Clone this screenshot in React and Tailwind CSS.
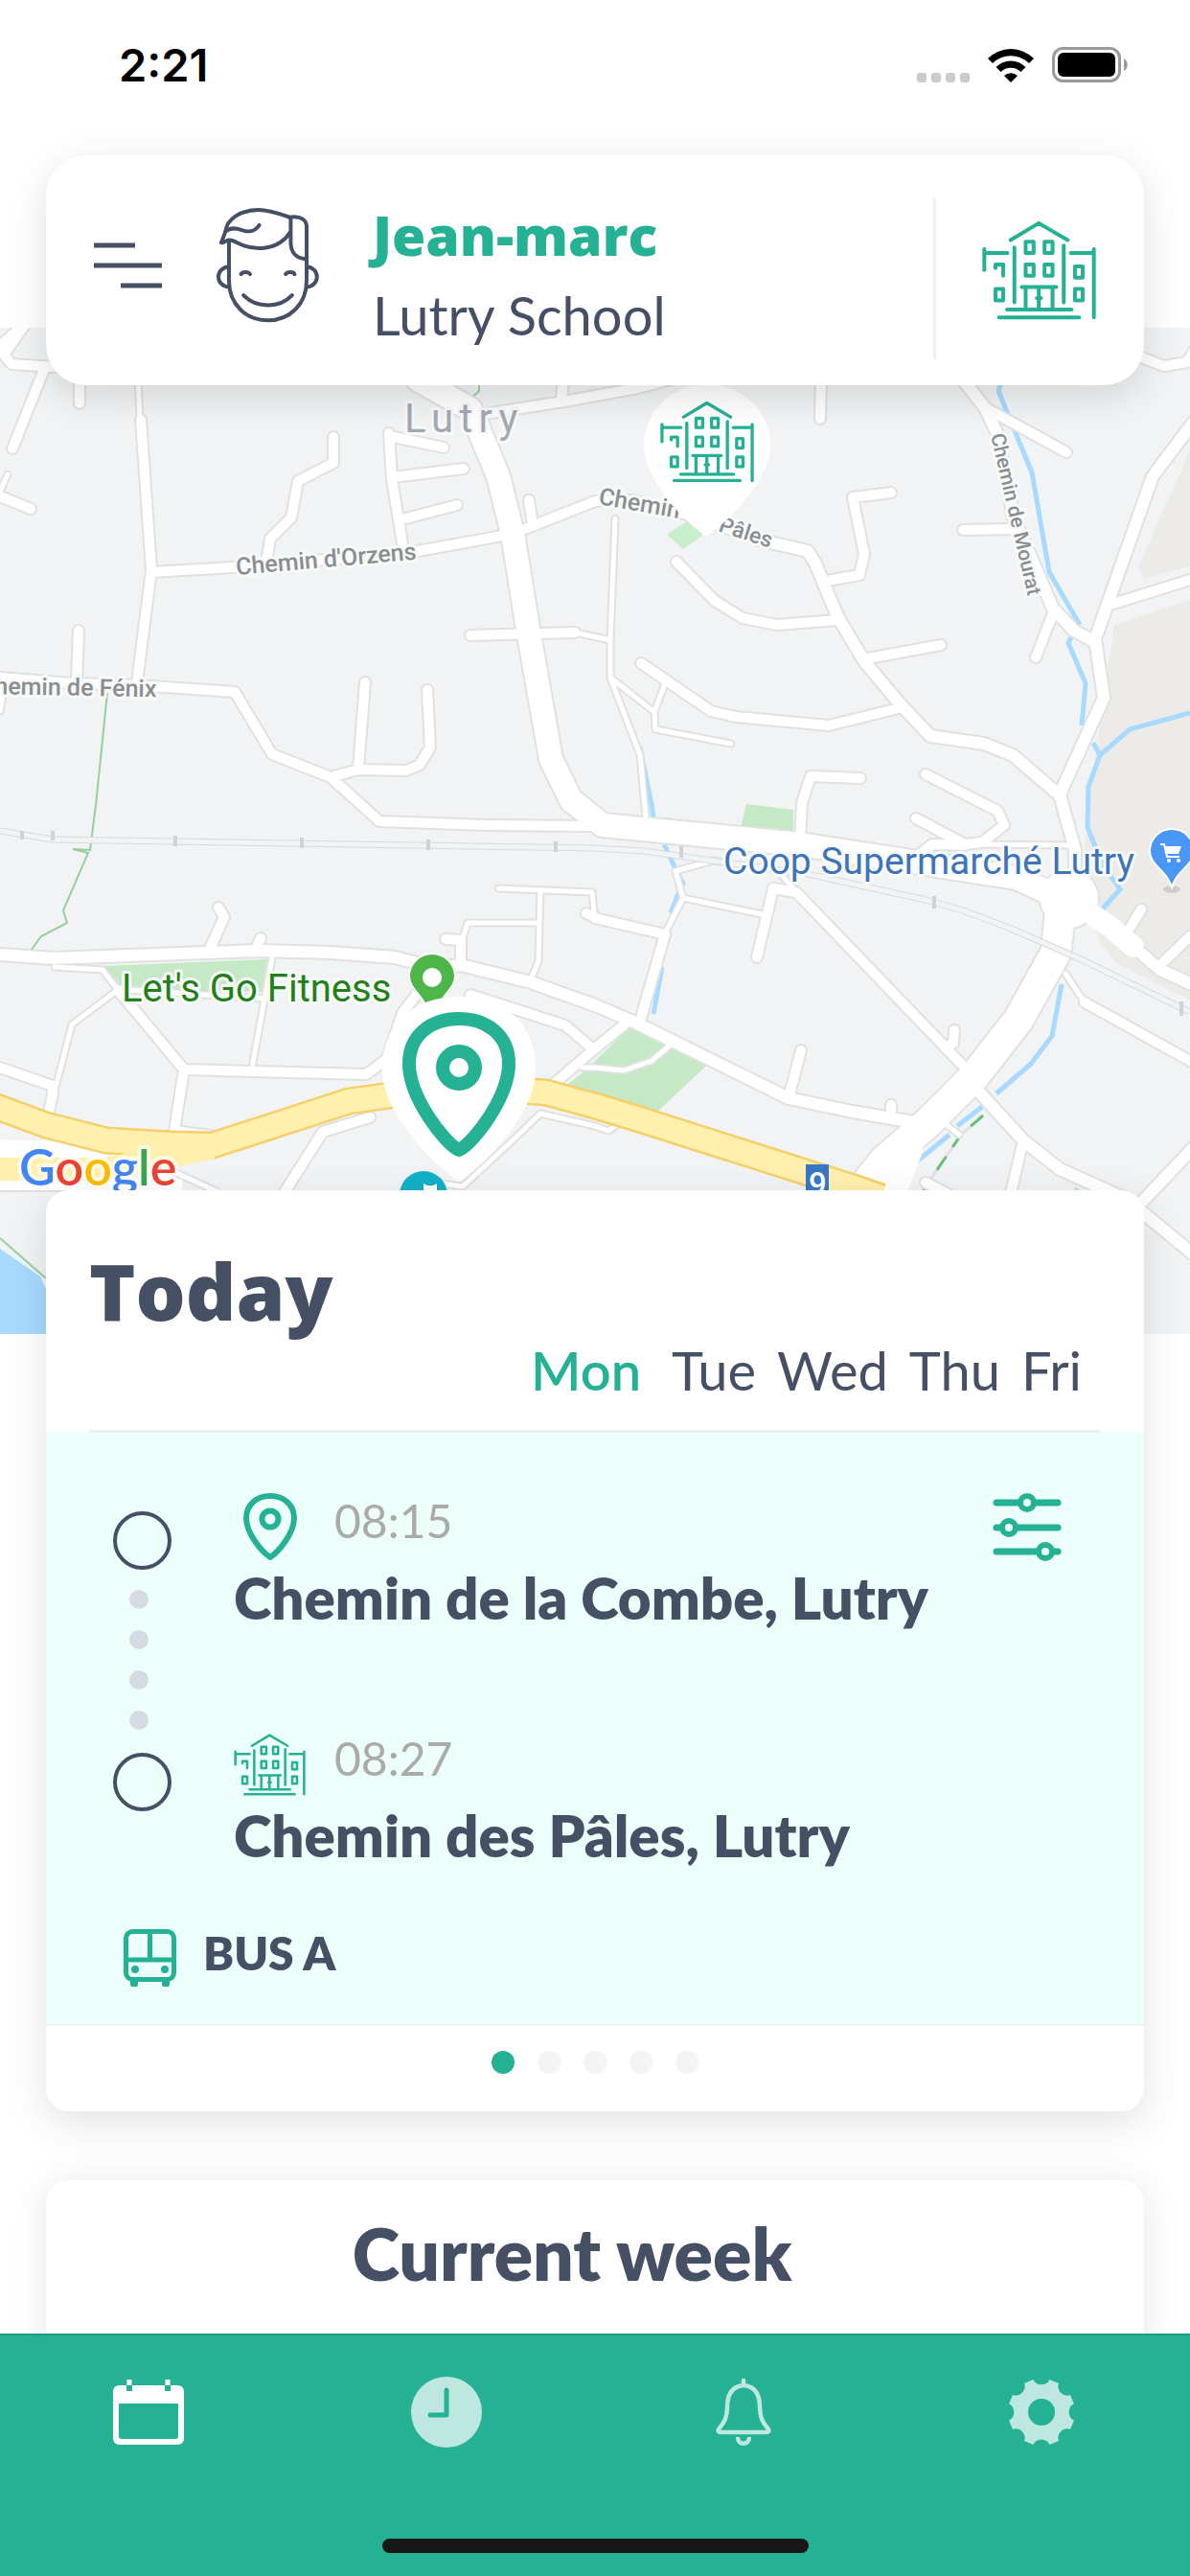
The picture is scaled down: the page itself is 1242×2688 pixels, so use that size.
import React from "react";

const GREEN = "#25b194";

function SchoolIcon(props) {
  return (
    <svg viewBox="200 118 356 310" fill="none" stroke={GREEN} strokeWidth="12" strokeLinecap="round" strokeLinejoin="round" aria-hidden="true" {...props}>
      <path d="M289 179 377 126 467 179M301 202V373M455 196V373M207 207V272M207 219H279M477 219H549M549 207V420" />
      <path d="M278 396H479M253 420H503M324 325H432M336 325V392M377 325V392M420 325V392M371 360H384" />
      <path d="M336 184H361V219H336ZM395 184H420V219H395ZM336 255H361V290H336ZM395 255H420V290H395ZM490 261H514V296H490ZM490 331H514V367H490ZM242 331H266V367H242ZM242 266V255H266V290" />
    </svg>
  );
}

function FaceIcon({ className }) {
  return (
    <svg viewBox="76 76 322 362" className={className} fill="none" stroke="#455065" strokeWidth="12" strokeLinecap="round" strokeLinejoin="round" aria-hidden="true">
      <path d="M115 182V305C115 380 168 431 237 431S359 380 359 305V138C359 117 342 101 305 107" />
      <path d="M309 108V185C309 216 325 236 355 238" />
      <path d="M305 107C270 95 240 84 209 84 152 84 108 112 104 152L91 187C99 188 103 183 109 180 118 176 131 181 141 187 195 216 270 211 306 156" />
      <path d="M104 152C120 138 140 142 153 147 175 155 197 152 210 132" />
      <path d="M115 262C71 266 71 323 115 326M359 262C402 266 402 323 359 326" />
      <path d="M153 286C158 278 176 277 181 286M293 286C298 278 317 277 321 286M161 352C200 393 274 394 313 352" />
    </svg>
  );
}

function PinIcon({ className }) {
  return (
    <svg viewBox="0 0 58 72" className={className} fill="none" stroke={GREEN} strokeWidth="6" strokeLinejoin="round" aria-hidden="true">
      <path d="M29 68C20 62 4 43 4 27 4 13 15 4 29 4S54 13 54 27C54 43 38 62 29 68Z" />
      <circle cx="29" cy="28" r="8.5" />
    </svg>
  );
}

const THIN = [
  "M0 742 4 718M144 395 146 437M8 495 0 513M600 660 637 668",
  "M642 541 637 668V707L668 788 674 853M637 707 683 743 684 761 763 776M694 713 683 743",
  "M1007 881 1116 882M760 900 744 898 705 909 713 937 695 972M713 937 795 954M815 912 831 931",
  "M57 1009 107 1012 123 1033 75 1069 59 1131M284 999 263 1114M135 1033 277 1042",
  "M520 927 618 931 620 950M564 929 562 1003 554 1022M562 963H488L483 979",
  "M608 1114H621L651 1117 680 1107 700 1090M460 1235 483 1238 535 1190 564 1162 621 1175 635 1180 645 1173",
  "M1112 1016 1132 1046M987 1173 1001 1184M182 1223 226 1243",
];

const MINOR = [
  "M28 336 4 370 12 380 59 383M-4 364 18 345M47 383 13 468M83 390V421M0 518 32 531",
  "M147 438 158 595 143 712M82 658 80 710M0 707 75 713 143 715 245 722 284 787 345 811 396 857 507 861 621 862",
  "M158 597 277 590 436 575 535 557 621 523 661 522 728 540 791 563",
  "M348 456V483L311 502 304 540 282 562 278 587M406 452 409 500 421 573M406 455 463 467M410 498 484 489M416 543 477 527",
  "M499 433 594 418 665 405 700 396M588 395 586 417M552 522 556 548M491 663 600 660",
  "M381 712 374 802M446 720 449 780 438 798 424 804 374 803 345 811",
  "M857 395 856 437M930 514 890 519 902 578 897 600 863 606M706 586 746 627 775 645 811 652 874 647",
  "M669 692 742 742 768 748 865 757 942 738M982 673 906 687",
  "M1033 428 1113 472M1005 553 1057 552M1099 640 1081 686M1162 630 1242 605M1191 373 1215 382 1239 378 1246 366",
  "M898 812 846 810 837 838 835 878M966 808 1041 846 1048 861 1025 879 1007 881 956 854M958 893 973 881 1007 882",
  "M621 958 694 975 669 1062M612 953 621 957M790 999 807 927 831 931 1005 1112",
  "M228 947 234 957 219 990M272 979 267 990M123 1033 192 1116 182 1180 226 1186M192 1116 382 1121 404 1105 420 1057 440 1031",
  "M0 1114 55 1133V1142L50 1164M465 980 481 981V1005M491 1038 590 1070 618 1094M578 1131 621 1094 653 1068",
  "M386 1166 337 1181 297 1244M836 1096 824 1142M996 1075 995 1088 987 1094M930 1153V1160",
  "M1068 1190 1055 1245M1132 1046 1242 1107M1191 949 1177 972M1213 1005 1242 977M966 1234 990 1246",
];

const MEDIUM = [
  "M791 563 843 575 851 588 874 643 902 690 938 733 971 768 1027 776 1057 788 1106 830",
  "M1005 396 1029 427 1041 453 1058 540 1099 635 1121 658 1143 670M1246 440 1203 497 1143 667 1152 728 1106 829 1122 887V925",
  "M0 996 55 1000 269 992 345 994 412 999 455 1010 481 1007 554 1025 621 1049 661 1066 823 1146 890 1160 960 1172",
  "M1017 1134 1068 1190 1106 1220 1175 1251 1246 1309M1193 1253 1246 1197M1148 961 1183 988 1211 1012 1246 1028",
];

const LARGE = "M436 396 491 427 520 497 535 557 552 662 575 792 596 835 629 861 835 881 958 900 1061 916 1108 938";
const TRUNK = "M1108 938 1102 994 1063 1064 1017 1123 969 1171 922 1212 890 1252";
const YELLOW = "M-6 1154 48 1174 111 1190 178 1194 222 1195 364 1149 479 1133 570 1140 621 1154 661 1166 894 1240 920 1249";
const RAIL = "M0 867 55 876 621 885 672 888 843 912 966 939 1005 950 1053 968 1128 1001 1242 1056";

function roadTier(width, paths) {
  const d = paths.join("");
  return { edge: <path d={d} stroke="#e0e1e1" strokeWidth={width + 4} />, fill: <path d={d} stroke="#fff" strokeWidth={width} /> };
}

function TownMap() {
  const tiers = [roadTier(5, THIN), roadTier(10, MINOR), roadTier(12, MEDIUM), roadTier(24, [LARGE]), roadTier(31, [TRUNK])];
  return (
    <svg viewBox="0 342 1242 1050" preserveAspectRatio="xMidYMid slice" className="block h-full w-full" role="img" aria-label="Map of Lutry" fontFamily="Roboto, 'Liberation Sans', sans-serif">
      <rect y="342" width="1242" height="1050" fill="#f1f3f4" />
      <path d="M1242 470 1188 592 1194 604 1242 591ZM1163 652 1242 626V1044L1165 1005 1148 983 1128 920 1139 820 1146 770 1156 700Z" fill="#ecebe7" />
      <path d="M779 839 828 845V870L773 863ZM107 1008 279 1001 273 1035 131 1033ZM590 1133 610 1118 657 1072 737 1112 686 1160 621 1141ZM1122 1238 1140 1250 1118 1250Z" fill="#c5e8c5" />
      <path d="M696 558 718 543 734 558 713 573Z" fill="#c9eeca" />
      <path d="M0 1303 42 1332 60 1372 70 1392H0Z" fill="#a8d9ff" />
      <g fill="none" stroke="#a8d9ff" strokeWidth="5">
        <path d="M1046 396 1042 408 1077 493 1095 597 1127 652M1118 665 1115 671 1133 713 1129 757M1141 775 1148 788 1179 761 1242 744M1148 788 1136 821 1135 863 1150 901 1169 928 1151 948" />
        <path d="M668 780 680 840 682 853M693 881 705 907 713 922 707 935 700 953M691 1009 682 1058M1108 1027 1098 1081 1076 1110 1040 1141M1025 1155 999 1175M991 1184 946 1221" />
      </g>
      <g fill="none" stroke="#97cf9f" strokeWidth="2">
        <path d="M112 723 100 840 94 887 76 886 92 890 66 950 70 963 43 977 32 992M500 396V408L489 418M0 1292 48 1334" />
      </g>
      <path d="M1026 1164 1003 1184 971 1231 964 1242" fill="none" stroke="#e0e1e1" strokeWidth="3" />
      <path d="M1026 1164 1003 1184 971 1231 964 1242" fill="none" stroke="#68bf80" strokeWidth="3" strokeDasharray="17 12" />
      <g fill="none" strokeLinecap="round" strokeLinejoin="round">
        {tiers.map((tier, i) => <g key={i}>{tier.edge}</g>)}
        <circle cx="1116" cy="938" r="31" fill="#fff" stroke="#e0e1e1" strokeWidth="2" />
        {tiers.map((tier, i) => <g key={i}>{tier.fill}</g>)}
        <path d="M1061 916 1116 938 1160 968 1183 988" stroke="#fff" strokeWidth="22" />
        <circle cx="1116" cy="936" r="29" fill="#fff" />
        <path d="M922 1216 912 1250M950 1200 930 1250" stroke="#fff" strokeWidth="26" />
      </g>
      <g fill="none">
        <path d={RAIL} stroke="#d8dadc" strokeWidth="7" />
        <path d={RAIL} stroke="#f1f3f4" strokeWidth="5" />
        <path d="M23 867V876M55 867V877M183 872V883M315 874V885M447 876V887M580 878V889M711 883V895M975 935V948M1233 1045V1060" stroke="#d0d2d5" strokeWidth="4" />
        <path d="M1090 927 1128 945" stroke="#fff" strokeWidth="8" />
      </g>
      <g fill="none" strokeLinejoin="round">
        <path d="M0 1199 60 1201 130 1212" stroke="#fff" strokeWidth="20" />
        <path d="M0 1238H190" stroke="#e0e1e1" strokeWidth="12" />
        <path d="M0 1236H190" stroke="#fff" strokeWidth="12" />
        <path d={YELLOW} stroke="#f6cf69" strokeWidth="29" />
        <path d="M0 1220 110 1220 178 1206 222 1198" stroke="#fff0ad" strokeWidth="24" />
        <path d={YELLOW} stroke="#fff0ad" strokeWidth="24" />
      </g>
      <g stroke="#f8fafa" strokeWidth="6" strokeLinejoin="round" paintOrder="stroke" fill="#898e91">
        <text x="422" y="451" fontSize="42" fill="#a3a9b5" className="tracking-[0.15em]">Lutry</text>
        <g fontSize="25" fontWeight="500">
          <text x="247" y="600" transform="rotate(-5 247 600)">Chemin d'Orzens</text>
          <text x="-22" y="724" transform="rotate(1 -22 724)">Chemin de Fénix</text>
        </g>
        <g fontSize="25" fontWeight="500">
          <text x="624" y="526" transform="rotate(10 624 526)">Chemin</text>
          <text x="749" y="554" transform="rotate(18 749 554)" fontSize="23">Pâles</text>
          <text x="1034" y="454" transform="rotate(77 1034 454)" fontSize="21">Chemin de Mourat</text>
        </g>
        <text x="127" y="1045" fontSize="40" fill="#228018">Let's Go Fitness</text>
        <text x="755" y="912" fontSize="39" fill="#3f74b8">Coop Supermarché Lutry</text>
      </g>
      <text x="20" y="1237" fontSize="52" fontFamily="Lato, sans-serif" fontWeight="600" stroke="#fff" strokeOpacity=".7" strokeWidth="8" strokeLinejoin="round" paintOrder="stroke">
        <tspan fill="#4285f4">G</tspan><tspan fill="#ea4335">o</tspan><tspan fill="#fbbc05">o</tspan><tspan fill="#4285f4">g</tspan><tspan fill="#34a853">l</tspan><tspan fill="#ea4335">e</tspan>
      </text>
      <path d="M841 1215H865V1252H841Z" fill="#3877c8" />
      <text x="844" y="1247" fontSize="33" fontWeight="500" fill="#fff">9</text>
      <circle cx="442" cy="1247" r="25" fill="#12b0c8" />
      <path d="M442 1235 446 1237H452L456 1235V1252H442Z" fill="#fff" />
      <path d="M451 995a24 24 0 0 0-24 24c0 14 18 20 24 48 6-28 24-34 24-48a24 24 0 0 0-24-24Z" fill="#4db649" stroke="#fff" strokeWidth="2" />
      <circle cx="451" cy="1020" r="10" fill="#fff" />
      <ellipse cx="1223" cy="928" rx="9" ry="4" fill="#cfcdca" />
      <path d="M1223 865a23 23 0 0 0-23 23c0 16 19 20 23 39 4-19 23-23 23-39a23 23 0 0 0-23-23Z" fill="#4a96f5" stroke="#fff" strokeWidth="2" />
      <path d="M1211 881H1215L1218 894H1231" fill="none" stroke="#fff" strokeWidth="2" />
      <path d="M1216 883H1233L1230 891H1218Z" fill="#fff" />
      <circle cx="1220" cy="898" r="2" fill="#fff" />
      <circle cx="1230" cy="898" r="2" fill="#fff" />
      <path d="M737 559C732 559 672 508 672 465a66 64 0 0 1 132 0C804 508 742 559 737 559Z" fill="#fff" />
      <SchoolIcon x="689" y="418" width="98" height="86" />
      <path d="M479 1233C466 1226 399 1168 399 1116 399 1066 434 1040 479 1040S559 1066 559 1116C559 1168 492 1226 479 1233Z" fill="#fff" />
      <path d="M479 1200C464 1193 427 1145 427 1110 427 1080 450 1063 479 1063S531 1080 531 1110C531 1145 494 1193 479 1200Z" fill="none" stroke={GREEN} strokeWidth="14" strokeLinejoin="round" />
      <circle cx="479" cy="1114" r="17" fill="none" stroke={GREEN} strokeWidth="14" />
    </svg>
  );
}

function StatusBar() {
  return (
    <div className="flex h-[162px] shrink-0 items-start justify-between pt-10 pr-16 pl-[124px]">
      <span className="font-[Inter,sans-serif] text-[47px] leading-14 font-semibold text-black">2:21</span>
      <div className="flex items-end gap-[19px] pt-[9px]">
        <span className="flex gap-[5px]">
          {[0, 1, 2, 3].map((i) => <i key={i} className="size-[10px] rounded-[3px] bg-[#cbcbcb]" />)}
        </span>
        <svg viewBox="0 0 48 36" className="h-9 w-12" aria-hidden="true">
          <path d="M24 36 17 29A10 10 0 0 1 31 29ZM13.500 25 8.500 20A22 22 0 0 1 39.500 20L34.500 25A15 15 0 0 0 13.500 25ZM5 16 0 11A34 34 0 0 1 48 11L43 16A27 27 0 0 0 5 16Z" />
        </svg>
        <svg viewBox="0 0 80 37" className="h-[37px] w-20" aria-hidden="true">
          <rect x="1.500" y="1.500" width="69" height="34" rx="10" fill="none" stroke="#9a9a9a" strokeWidth="3" />
          <rect x="6" y="6" width="60" height="25" rx="6" />
          <path d="M75 12C80 15 80 22 75 25Z" fill="#9a9a9a" />
        </svg>
      </div>
    </div>
  );
}

function ProfileHeader() {
  return (
    <header className="relative z-10 mx-12 flex h-60 shrink-0 items-center rounded-[42px] bg-white px-[50px] shadow-[0_12px_40px_rgba(0,0,0,0.13)]">
      <button type="button" aria-label="Menu" className="mb-2.5 shrink-0">
        <svg viewBox="0 0 71 48" className="h-12 w-[71px]" stroke="#455065" strokeWidth="5" aria-hidden="true">
          <path d="M0 3H43M0 24H71M28 45H71" />
        </svg>
      </button>
      <FaceIcon className="mb-3 ml-[57px] h-[121px] w-[107px] shrink-0" />
      <div className="ml-14 flex-1 pt-2.5">
        <h1 className="font-['Open_Sans',sans-serif] text-[57px] leading-[84px] font-extrabold text-[#25b194]">Jean-marc</h1>
        <p className="text-[56px] leading-[84px]">Lutry School</p>
      </div>
      <div className="mt-4.5 h-42 w-[3px] bg-[#eeeff0]" />
      <button type="button" aria-label="School" className="ml-12 shrink-0">
        <SchoolIcon className="h-[104px] w-[119px]" />
      </button>
    </header>
  );
}

function Stop({ icon, time, address }) {
  return (
    <li>
      <div className="flex h-[72px] items-start gap-[30px]">
        <span className="flex h-full w-[75px] items-center justify-center">{icon}</span>
        <time className="text-[48px] leading-[60px] text-[#aaaaaa]">{time}</time>
      </div>
      <p className="mt-1 text-[60px] leading-[68px] font-extrabold">{address}</p>
    </li>
  );
}

function TodayCard() {
  return (
    <section className="relative z-10 mx-12 -mt-[150px] shrink-0 overflow-hidden rounded-[24px] bg-white">
      <div className="mx-[45px] border-b-[3px] border-[#eeeff0] pt-14 pb-[26px]">
        <h2 className="font-['Open_Sans',sans-serif] text-[82px] leading-24 font-extrabold">Today</h2>
        <div className="flex justify-end gap-[22px] pr-5 text-[56px] leading-[72px]">
          <button type="button" aria-pressed="true" className="mr-2.5 font-semibold text-[#25b194]">Mon</button>
          <button type="button">Tue</button>
          <button type="button">Wed</button>
          <button type="button">Thu</button>
          <button type="button">Fri</button>
        </div>
      </div>
      <div className="border-b-[2px] border-[#f0f1f1] bg-[#ecfffb] pt-[62px] pr-20 pb-[39px] pl-[70px]">
        <div className="flex">
          <div className="flex w-[61px] flex-col items-center pt-5" aria-hidden="true">
            <i className="size-[61px] rounded-full border-4 border-[#455065]" />
            <span className="mt-[21px] mr-2 mb-6 flex flex-col gap-[22px]">
              {[0, 1, 2, 3].map((i) => <i key={i} className="size-5 rounded-full bg-[#d6dbe3]" />)}
            </span>
            <i className="size-[61px] rounded-full border-4 border-[#455065]" />
          </div>
          <ol className="ml-[65px] flex flex-1 flex-col gap-[104px]">
            <Stop icon={<PinIcon className="h-[72px] w-[58px]" />} time="08:15" address="Chemin de la Combe, Lutry" />
            <Stop icon={<SchoolIcon className="h-[65px] w-[75px]" />} time="08:27" address="Chemin des Pâles, Lutry" />
          </ol>
          <button type="button" aria-label="Adjust" className="mr-1.5 -ml-[72px] self-start">
            <svg viewBox="0 0 72 73" className="h-[73px] w-[72px]" fill="#ecfffb" stroke={GREEN} strokeWidth="7" strokeLinecap="round" aria-hidden="true">
              <path d="M4 11H68M4 37H68M4 62H68" />
              <circle cx="36" cy="11" r="7" strokeWidth="6" />
              <circle cx="17" cy="37" r="7" strokeWidth="6" />
              <circle cx="55" cy="62" r="7" strokeWidth="6" />
            </svg>
          </button>
        </div>
        <div className="mt-[54px] ml-[11px] flex items-center gap-7">
          <svg viewBox="0 0 55 60" className="mt-2.5 h-15 w-[55px]" fill="none" stroke={GREEN} strokeWidth="5" aria-hidden="true">
            <rect x="2.500" y="2.500" width="50" height="50" rx="7" />
            <path d="M2.500 32H52.500M27.500 3V32" />
            <path d="M11 54V57M44 54V57" strokeWidth="8" strokeLinecap="round" />
            <circle cx="12" cy="42" r="4" fill={GREEN} stroke="none" />
            <circle cx="43" cy="42" r="4" fill={GREEN} stroke="none" />
          </svg>
          <span className="text-[48px] leading-15 font-extrabold">BUS A</span>
        </div>
      </div>
      <div className="flex justify-center gap-6 pt-[26px] pb-[39px]">
        {["Mon", "Tue", "Wed", "Thu", "Fri"].map((day, i) => (
          <button key={day} type="button" aria-label={day} className={i === 0 ? "size-6 rounded-full bg-[#25b194]" : "size-6 rounded-full bg-[#f4f4f4]"} />
        ))}
      </div>
    </section>
  );
}

function TabBar() {
  return (
    <nav className="relative z-20 shrink-0 border-t-2 border-[#209b80] bg-[#25b194] pb-6">
      <div className="grid grid-cols-4 pt-[42px] text-[#bee8df]">
        <a href="#calendar" aria-label="Calendar" aria-current="page" className="flex justify-center text-white">
          <svg viewBox="0 0 76 76" className="size-[76px]" fill="currentColor" aria-hidden="true">
            <path fillRule="evenodd" d="M8 10H68Q75 10 75 17V65Q75 72 68 72H8Q1 72 1 65V17Q1 10 8 10ZM8 29Q7 29 7 30V63Q7 66 10 66H66Q69 66 69 63V30Q69 29 68 29Z" />
            <path d="M18 9V16M58 9V16" stroke={GREEN} strokeWidth="6" />
            <path d="M18 4V10M58 4V10" stroke="currentColor" strokeWidth="5" />
          </svg>
        </a>
        <a href="#history" aria-label="History" className="flex justify-center">
          <svg viewBox="0 0 76 76" className="size-[76px]" aria-hidden="true">
            <circle cx="38" cy="38" r="37" fill="currentColor" />
            <path d="M38 15V41H21" fill="none" stroke={GREEN} strokeWidth="5" strokeLinecap="round" strokeLinejoin="round" />
          </svg>
        </a>
        <a href="#alerts" aria-label="Alerts" className="flex justify-center">
          <svg viewBox="0 0 76 76" className="size-[76px]" fill="none" stroke="currentColor" strokeWidth="4.500" strokeLinejoin="round" aria-hidden="true">
            <path d="M38 10C26 11 21 20 21 33 21 47 15 51 12 56 11 58 12 59 14 59H62C64 59 65 58 64 56 61 51 55 47 55 33 55 20 50 11 38 10ZM38 5V10" strokeLinecap="round" />
            <path d="M32 64C32 73 44 73 44 64" />
          </svg>
        </a>
        <a href="#settings" aria-label="Settings" className="flex justify-center">
          <svg viewBox="0 0 76 76" className="size-[76px]" fill="currentColor" aria-hidden="true">
            <path fillRule="evenodd" d="M29.500 4C32 11 44 11 46.500 4L56 8C53 15 61 23 68 20L72 29.500C65 32 65 44 72 46.500L68 56C61 53 53 61 56 68L46.500 72C44 65 32 65 29.500 72L20 68C23 61 15 53 8 56L4 46.500C11 44 11 32 4 29.500L8 20C15 23 23 15 20 8ZM38 24A14 14 0 1 0 38 52A14 14 0 1 0 38 24Z" />
          </svg>
        </a>
      </div>
      <div className="mx-auto mt-[94px] h-[15px] w-[445px] rounded-full bg-[#171717]" />
    </nav>
  );
}

export default function App() {
  return (
    <div className="flex h-screen flex-col overflow-hidden bg-white font-[Lato,sans-serif] text-[#455065]">
      <main className="flex min-h-0 flex-1 flex-col overflow-y-auto [scrollbar-width:none]">
        <StatusBar />
        <ProfileHeader />
        <div className="-mt-15 h-[1050px] shrink-0">
          <TownMap />
        </div>
        <div className="shrink-0 drop-shadow-[0_12px_20px_rgba(0,0,0,0.11)]">
          <TodayCard />
        </div>
        <section className="mx-12 mt-[72px] shrink-0 rounded-t-[24px] bg-white pt-8 pr-12 pb-15 shadow-[0_4px_40px_rgba(0,0,0,0.1)]">
          <h2 className="text-center text-[75px] leading-[88px] font-extrabold">Current week</h2>
        </section>
      </main>
      <TabBar />
    </div>
  );
}
